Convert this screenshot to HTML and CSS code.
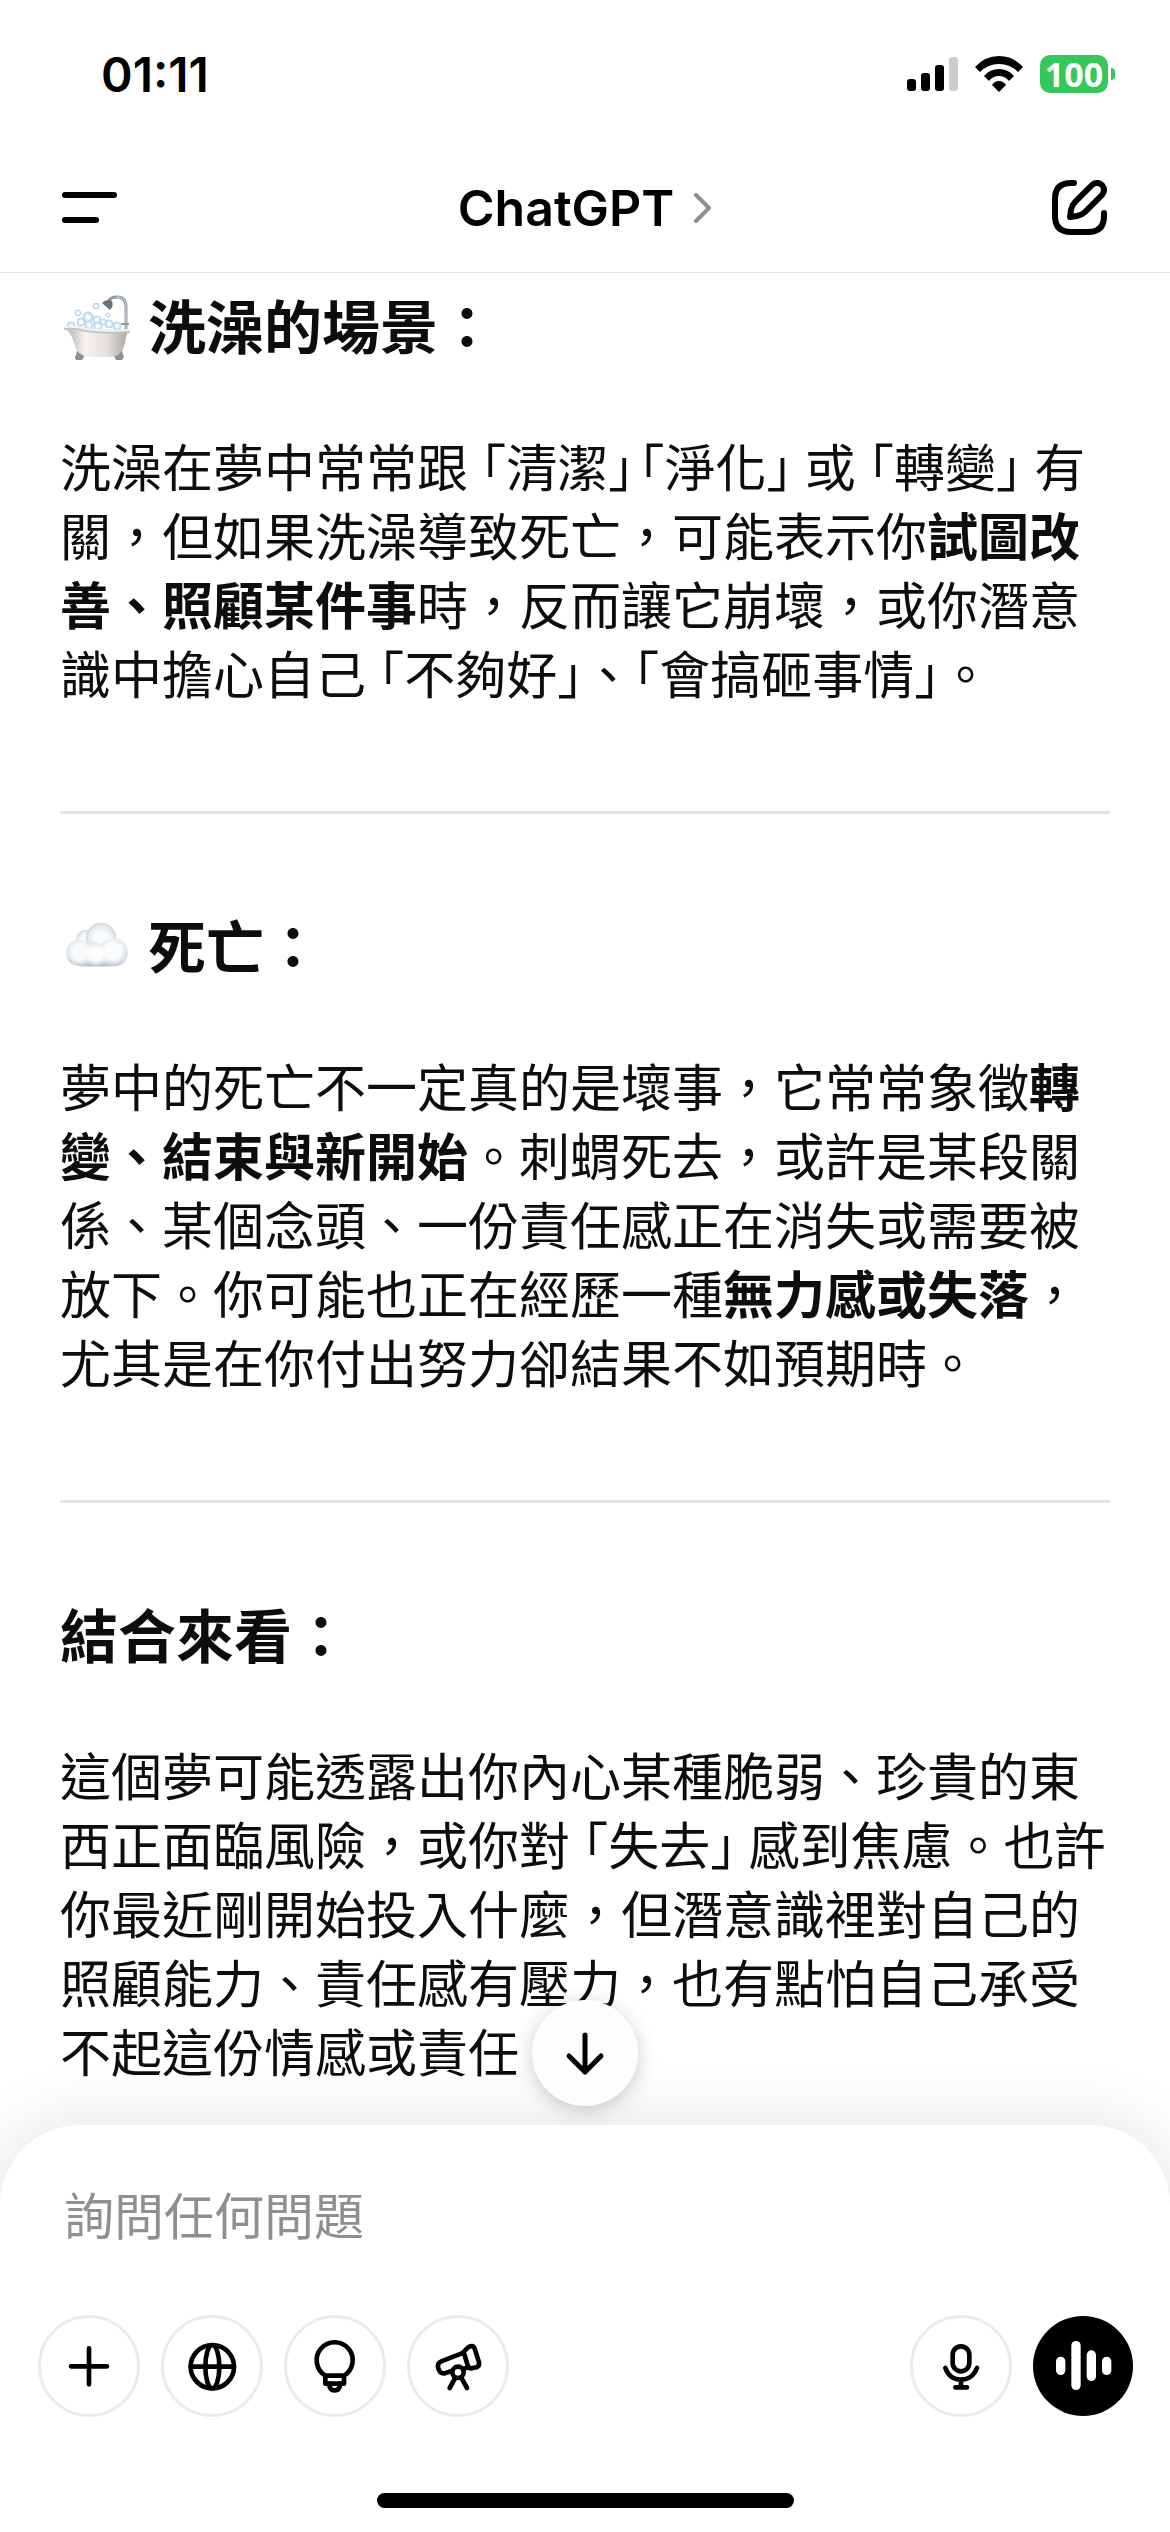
FILE: index.html
```html
<!DOCTYPE html>
<html lang="zh-Hant">
<head>
    <meta charset="UTF-8">
    <meta name="viewport" content="width=device-width, initial-scale=1.0">
    <title>ChatGPT</title>
    <link rel="stylesheet" href="styles.css">
</head>
<body>
    <div class="status-bar">
        <span class="time">01:11</span>
        <div class="status-icons">
            <svg width="51" height="34" viewBox="0 0 51 34" aria-hidden="true">
                <rect x="0" y="22" width="9" height="12" rx="3"/>
                <rect x="14" y="16" width="9" height="18" rx="3"/>
                <rect x="28" y="8" width="9" height="26" rx="3"/>
                <rect x="42" y="0" width="9" height="34" rx="3" fill="#cccccc"/>
            </svg>
            <svg width="48" height="36" viewBox="0 0 48 36" aria-hidden="true">
                <path d="M0 11 Q10 0 24 0 Q38 0 48 11 L43 16 Q35 8 24 8 Q13 8 5 16 Z"/>
                <path d="M9 20 Q15 13 24 13 Q33 13 39 20 L34 25 Q30 20 24 20 Q18 20 14 25 Z"/>
                <path d="M17 29 Q20 25 24 25 Q28 25 31 29 L24 36 Z"/>
            </svg>
            <div class="battery"><span class="battery-level">100</span></div>
        </div>
    </div>

    <header class="header">
        <button class="icon-btn" aria-label="選單">
            <svg width="56" height="56" viewBox="0 0 56 56">
                <rect x="0" y="12" width="55" height="6" rx="3"/>
                <rect x="0" y="37" width="37" height="6" rx="3"/>
            </svg>
        </button>
        <button class="title">
            ChatGPT
            <svg width="18" height="30" viewBox="0 0 18 30" fill="none" stroke="#8e8e93" stroke-width="4" stroke-linecap="round" stroke-linejoin="round">
                <path d="M2 2 L15 15 L2 28"/>
            </svg>
        </button>
        <button class="icon-btn" aria-label="新對話">
            <svg width="56" height="56" viewBox="0 0 56 56" fill="none" stroke="#000" stroke-width="6" stroke-linecap="round" stroke-linejoin="round">
                <path d="M22 3 H19 Q3 3 3 19 V36 Q3 52 19 52 H36 Q52 52 52 36 V33"/>
                <path d="M18 37 L19 30 Q20 25 23 22 L40 5 Q45 1 50 5 Q54 10 50 15 L33 32 Q30 35 25 36 Z"/>
            </svg>
        </button>
    </header>

    <main class="chat">
        <section>
            <h2>
                <svg class="emoji" viewBox="0 0 66 66" role="img" aria-label="浴缸">
                    <defs>
                        <linearGradient id="tub" x1="0" x2="1">
                            <stop offset="0" stop-color="#b9b5b2"/>
                            <stop offset=".3" stop-color="#f4f2f0"/>
                            <stop offset=".65" stop-color="#e4e1df"/>
                            <stop offset="1" stop-color="#a9a5a3"/>
                        </linearGradient>
                        <radialGradient id="bubble">
                            <stop offset=".3" stop-color="#ffffff"/>
                            <stop offset="1" stop-color="#a9d5f0"/>
                        </radialGradient>
                    </defs>
                    <path d="M62 34 V12 Q62 2 53 2 Q46 2 44 7" fill="none" stroke="#8f99a3" stroke-width="3"/>
                    <path d="M62 34 V12 Q62 2 53 2" fill="none" stroke="#d3dae0" stroke-width="1"/>
                    <path d="M38 8 Q43 3 48 6 Q50 11 46 15 Z" fill="#68727c"/>
                    <path d="M57 29 H65" stroke="#8f99a3" stroke-width="2"/>
                    <g fill="url(#bubble)" stroke="#b5daf0" stroke-width="1">
                        <circle cx="32" cy="11" r="3"/>
                        <circle cx="14" cy="18" r="3"/>
                        <circle cx="44" cy="20" r="2"/>
                        <circle cx="7" cy="31" r="4"/>
                        <circle cx="17" cy="27" r="4"/>
                        <circle cx="33" cy="25" r="4"/>
                        <circle cx="24" cy="22" r="5"/>
                        <circle cx="39" cy="27" r="3"/>
                        <circle cx="45" cy="29" r="4"/>
                        <circle cx="53" cy="31" r="4"/>
                        <circle cx="25" cy="30" r="4"/>
                        <circle cx="34" cy="31" r="4"/>
                    </g>
                    <path d="M12 60 Q12 54 18 52 L23 58 Q20 61 18 65 H12 Q10 62 12 60 Z" fill="#87919a"/>
                    <path d="M59 60 Q59 54 52 52 L47 58 Q51 61 52 65 H58 Q61 62 59 60 Z" fill="#87919a"/>
                    <path d="M3 35 Q8 40 10 48 Q13 62 27 62 H45 Q58 62 61 48 Q62 40 64 37 Z" fill="url(#tub)"/>
                    <path d="M1 33 Q12 32 22 35 Q42 38 65 36" fill="none" stroke="#c6c2bf" stroke-width="4" stroke-linecap="round"/>
                    <path d="M1 32 Q12 31 22 34 Q42 37 65 35" fill="none" stroke="#f5f3f2" stroke-width="2" stroke-linecap="round"/>
                </svg>
                洗澡的場景：
            </h2>
            <p>洗澡在夢中常常跟<span class="open">「</span>清潔<span class="close tight">」</span><span class="open">「</span>淨化<span class="close">」</span>或<span class="open">「</span>轉變<span class="close">」</span>有關，但如果洗澡導致死亡，可能表示你<strong>試圖改善、照顧某件事</strong>時，反而讓它崩壞，或你潛意識中擔心自己<span class="open">「</span>不夠好<span class="close">」</span><span class="stop">、</span><span class="open">「</span>會搞砸事情<span class="close tight">」</span>。</p>
        </section>
        <hr>
        <section>
            <h2>
                <svg class="emoji" viewBox="0 0 66 66" role="img" aria-label="雲">
                    <defs>
                        <radialGradient id="puff">
                            <stop offset=".4" stop-color="#fafbfc"/>
                            <stop offset=".85" stop-color="#e3e9ee"/>
                            <stop offset="1" stop-color="#c4ced8"/>
                        </radialGradient>
                        <radialGradient id="glow">
                            <stop offset="0" stop-color="#fcfdfd"/>
                            <stop offset=".5" stop-color="#fafbfc"/>
                            <stop offset="1" stop-color="#f4f6f8" stop-opacity="0"/>
                        </radialGradient>
                        <linearGradient id="base" x1="0" y1="0" x2="0" y2="1">
                            <stop offset="0" stop-color="#dde4ea"/>
                            <stop offset=".7" stop-color="#d3dce4"/>
                            <stop offset="1" stop-color="#afbdca"/>
                        </linearGradient>
                    </defs>
                    <circle cx="22" cy="25" r="10" fill="url(#puff)"/>
                    <circle cx="37" cy="23" r="15" fill="url(#puff)"/>
                    <path d="M15 51 Q2 49 2 38 Q3 26 15 25 Q21 25 24 29 Q31 25 37 29 Q42 23 51 23 Q63 25 64 38 Q63 49 53 51 Q34 52 15 51 Z" fill="url(#base)"/>
                    <circle cx="16" cy="37" r="15" fill="url(#glow)"/>
                    <circle cx="49" cy="36" r="16" fill="url(#glow)"/>
                    <circle cx="32" cy="39" r="13" fill="url(#glow)"/>
                </svg>
                死亡：
            </h2>
            <p>夢中的死亡不一定真的是壞事，它常常象徵<strong>轉變、結束與新開始</strong>。刺蝟死去，或許是某段關係、某個念頭、一份責任感正在消失或需要被放下。你可能也正在經歷一種<strong>無力感或失落</strong>，尤其是在你付出努力卻結果不如預期時。</p>
        </section>
        <hr>
        <section>
            <h2>結合來看：</h2>
            <p>這個夢可能透露出你內心某種脆弱、珍貴的東西正面臨風險，或你對<span class="open">「</span>失去<span class="close">」</span>感到焦慮。也許你最近剛開始投入什麼，但潛意識裡對自己的照顧能力、責任感有壓力，也有點怕自己承受不起這份情感或責任</p>
        </section>
    </main>

    <footer class="composer">
        <button class="scroll-down" aria-label="捲動到底部">
            <svg width="42" height="46" viewBox="0 0 42 46" fill="none" stroke="#000" stroke-width="5" stroke-linecap="round" stroke-linejoin="round">
                <path d="M21 5 V42 M5 26 L21 42 L37 26"/>
            </svg>
        </button>
        <input class="prompt" type="text" placeholder="詢問任何問題" aria-label="詢問任何問題">
        <div class="tools">
            <button class="tool" aria-label="新增">
                <svg viewBox="0 0 180 180"><path d="M90 37 V145 M36 91 H144"/></svg>
            </button>
            <button class="tool" aria-label="搜尋">
                <svg viewBox="0 0 180 180">
                    <circle cx="91" cy="92" r="65"/>
                    <ellipse cx="91" cy="92" rx="21" ry="65"/>
                    <path d="M26 92 H156"/>
                </svg>
            </button>
            <button class="tool" aria-label="推理">
                <svg viewBox="0 0 180 180">
                    <path d="M61 119 A54 54 0 1 1 117 119 V143 H61 Z M61 119 H117"/>
                    <path d="M72 143 Q74 163 89 163 Q104 163 106 143"/>
                </svg>
            </button>
            <button class="tool" aria-label="深入研究">
                <svg viewBox="0 0 180 180">
                    <path d="M107 48 L118 36 Q134 24 140 38 L153 79 Q155 90 145 94 L131 97 Q122 98 119 88 Z"/>
                    <path d="M107 50 L40 76 Q26 82 31 97 Q36 114 50 112 L70 105 M106 98 L124 94"/>
                    <circle cx="90" cy="109" r="17"/>
                    <path d="M81 127 L65 156 M101 127 L117 156"/>
                </svg>
            </button>
            <button class="tool mic" aria-label="語音輸入">
                <svg viewBox="0 0 180 180">
                    <rect x="65" y="31" width="50" height="75" rx="25"/>
                    <path d="M43 96 Q56 131 90 131 Q124 131 138 96 M90 131 V154 M73 154 H108"/>
                </svg>
            </button>
            <button class="tool voice" aria-label="語音模式">
                <svg viewBox="0 0 180 180">
                    <rect x="9" y="62" width="28" height="55" rx="14"/>
                    <rect x="55" y="15" width="28" height="147" rx="14"/>
                    <rect x="101" y="43" width="28" height="92" rx="14"/>
                    <rect x="147" y="62" width="28" height="55" rx="14"/>
                </svg>
            </button>
        </div>
        <div class="home-indicator"></div>
    </footer>
</body>
</html>
```

FILE: styles.css
```css
* {
    box-sizing: border-box;
}
body {
    margin: 0;
    min-height: 100vh;
    display: flex;
    flex-direction: column;
    background: #fff;
    color: #0d0d0d;
    font-family: Inter, "Noto Sans CJK TC", sans-serif;
}
button {
    margin: 0;
    padding: 0;
    border: none;
    background: none;
    color: #000;
    font-family: inherit;
    cursor: pointer;
}
svg {
    display: block;
    flex: none;
}

/* status bar */
.status-bar {
    display: flex;
    align-items: center;
    justify-content: space-between;
    height: 148px;
    padding: 0 55px 0 101px;
    color: #000;
}
.time {
    font-size: 48px;
    font-weight: 600;
}
.status-icons {
    display: flex;
    align-items: center;
    gap: 17px;
}
.battery {
    position: relative;
    width: 68px;
    height: 38px;
    margin-right: 7px;
    border-radius: 10px;
    background: #34c759;
    color: #fff;
    font-family: "Open Sans", sans-serif;
    font-size: 34px;
    font-weight: 700;
    line-height: 38px;
    text-align: center;
}
.battery::after {
    content: "";
    position: absolute;
    top: 13px;
    right: -7px;
    width: 4px;
    height: 12px;
    border-radius: 0 4px 4px 0;
    background: #34c759;
}

/* header */
.header {
    display: flex;
    align-items: center;
    justify-content: space-between;
    height: 125px;
    padding: 0 62px 5px;
    border-bottom: 1px solid #e0e0e0;
}
.title {
    display: flex;
    align-items: center;
    gap: 20px;
    font-size: 50px;
    font-weight: 600;
}

/* conversation */
.chat {
    flex: 1;
    padding: 15px 60px 0;
}
h2 {
    display: flex;
    align-items: center;
    gap: 18px;
    margin: 0 0 66px;
    font-size: 58px;
    font-weight: 700;
    line-height: 80px;
}
.emoji {
    width: 66px;
    height: 66px;
    margin-left: 4px;
}
p {
    margin: 0;
    font-size: 51px;
    line-height: 69px;
}
strong {
    font-weight: 700;
}
hr {
    height: 3px;
    margin: 101px 0 94px;
    border: none;
    background: #e5e5e5;
}
/* corner brackets take three quarters of an em */
.open,
.close,
.stop {
    font-feature-settings: "halt";
}
.open {
    margin-left: 0.25em;
}
.close {
    margin-right: 0.25em;
}
.close.tight {
    margin-right: 0;
}
.tight + .open {
    margin-left: 0.1em;
}

/* composer */
.composer {
    position: relative;
    padding: 50px 37px 24px 38px;
    border-radius: 80px 80px 0 0;
    background: #fff;
    box-shadow: 0 0 70px rgba(0, 0, 0, 0.12);
}
.scroll-down {
    position: absolute;
    top: -125px;
    left: calc(50% - 53px);
    display: flex;
    align-items: center;
    justify-content: center;
    width: 106px;
    height: 106px;
    border-radius: 50%;
    background: #fdfdfd;
    box-shadow: 0 4px 20px rgba(0, 0, 0, 0.2);
}
.prompt {
    display: block;
    width: 100%;
    height: 84px;
    padding: 0 26px;
    border: none;
    outline: none;
    background: none;
    color: #0d0d0d;
    font-family: inherit;
    font-size: 50px;
}
.prompt::placeholder {
    color: #8f8f8f;
    opacity: 1;
}
.tools {
    display: flex;
    align-items: center;
    gap: 21px;
    margin-top: 56px;
}
.tool {
    display: flex;
    align-items: center;
    justify-content: center;
    width: 102px;
    height: 102px;
    border: 3px solid #ebebeb;
    border-radius: 50%;
}
.tool svg {
    width: 60px;
    height: 60px;
    fill: none;
    stroke: #000;
    stroke-width: 14;
    stroke-linecap: round;
    stroke-linejoin: round;
}
.mic {
    margin-left: auto;
}
.voice {
    width: 100px;
    height: 100px;
    border: none;
    background: #000;
}
.voice svg {
    fill: #fff;
    stroke: none;
}
.home-indicator {
    width: 417px;
    height: 15px;
    margin: 76px auto 0;
    border-radius: 8px;
    background: #000;
}
```
